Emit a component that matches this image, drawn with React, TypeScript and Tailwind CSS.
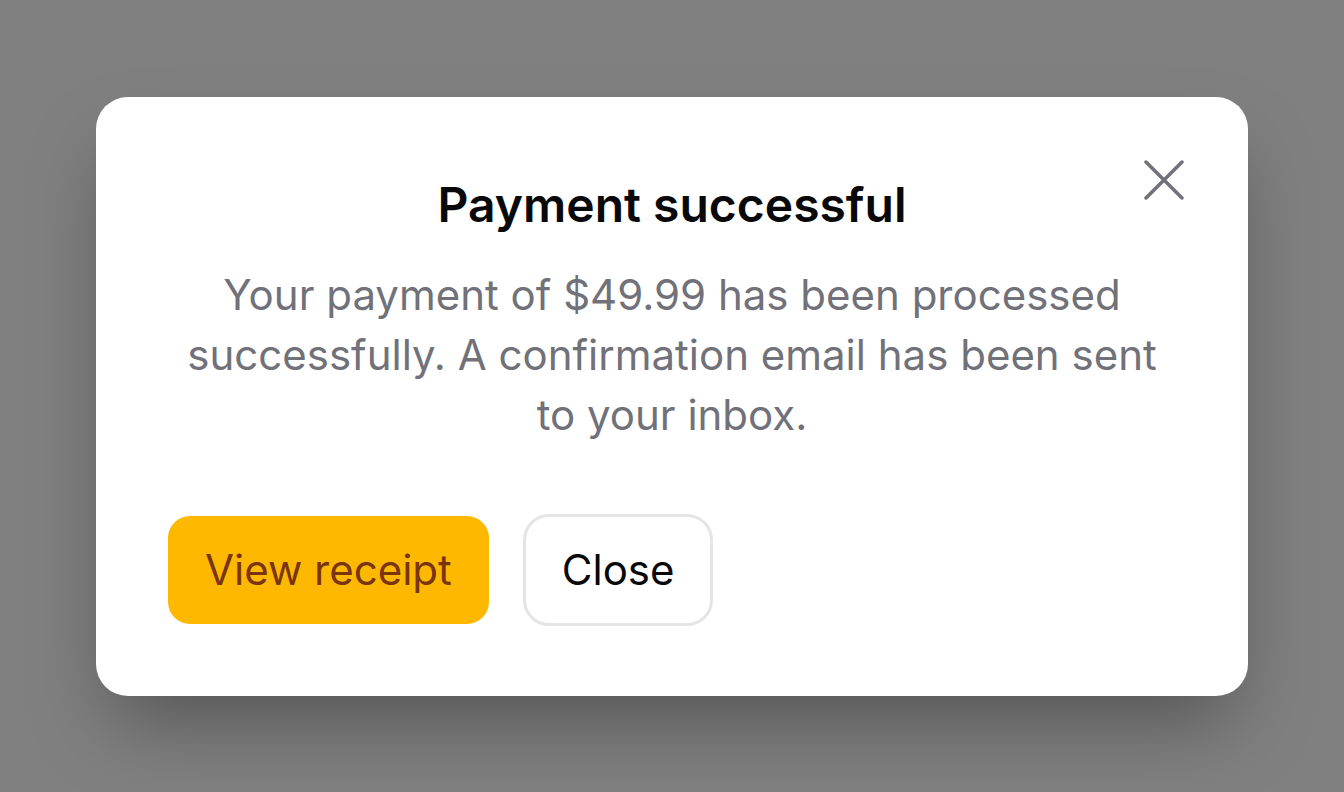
import { useState } from 'react';

const CloseIcon = () => (
  <svg width="40" height="40" viewBox="0 0 40 40" fill="none" stroke="currentColor" strokeWidth="3.5" strokeLinecap="round">
    <path d="M2 2 L38 38" />
    <path d="M38 2 L2 38" />
  </svg>
);

const App = () => {
  const [open, setOpen] = useState(true);

  return (
    <div className="min-h-screen w-full bg-[#808080] flex items-center justify-center" style={{ fontFamily: 'Inter, "Noto Sans", sans-serif' }}>
      {open && (
        <div className="relative w-[1152px] rounded-[32px] bg-white px-[72px] pt-[80px] pb-[70px] shadow-[0_40px_80px_-16px_rgba(0,0,0,0.35)]">
          <button
            className="absolute right-[64px] top-[63px] text-[#71717a]"
            onClick={() => setOpen(false)}
            aria-label="Close"
          >
            <CloseIcon />
          </button>

          <h2 className="text-center text-[48px] leading-[56px] font-semibold text-[#09090b]">
            Payment successful
          </h2>
          <p className="mt-[32px] text-center text-[42px] leading-[60px] text-[#71717a]">
            Your payment of $49.99 has been processed successfully. A confirmation email has been sent to your inbox.
          </p>

          <div className="mt-[69px] flex items-center gap-[34px]">
            <button className="h-[108px] rounded-[22px] bg-[#ffb800] px-[37px] text-[42px] text-[#78350f]">
              View receipt
            </button>
            <button
              className="h-[112px] rounded-[26px] border-[3px] border-[#e5e5e5] bg-white px-[36px] text-[42px] text-[#09090b]"
              onClick={() => setOpen(false)}
            >
              Close
            </button>
          </div>
        </div>
      )}
    </div>
  );
};

export default App;
